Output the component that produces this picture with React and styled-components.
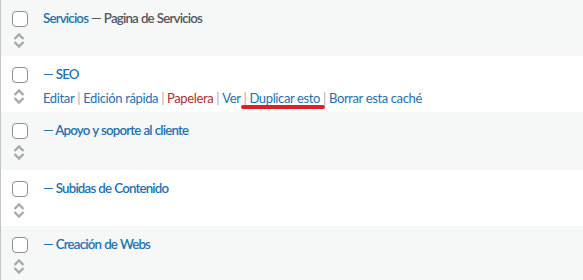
import React from "react";
import styled, { createGlobalStyle } from "styled-components";

const Global = createGlobalStyle`
  body {
    margin: 0;
    background: #fff;
    font-family: Lato, "Open Sans", sans-serif;
  }
`;

const Table = styled.div`
  width: 583px;
  height: 280px;
  overflow: hidden;
  border-left: 1px solid #c3c4c7;
  box-sizing: border-box;
`;

const Row = styled.div`
  display: flex;
  height: ${(p) => p.h}px;
  background: ${(p) => (p.alt ? "#f6f7f7" : "#fff")};
`;

const CheckCol = styled.div`
  width: 42px;
  flex: none;
  display: flex;
  flex-direction: column;
  padding: 11px 0 0 11px;
  box-sizing: border-box;
`;

const Box = styled.span`
  width: 16px;
  height: 16px;
  border: 1px solid #8c8f94;
  border-radius: 4px;
  box-sizing: border-box;
  background: #fff;
`;

const Handle = styled.svg`
  margin: 5px 0 0 1px;
`;

const Content = styled.div`
  padding-top: 8px;
  display: flex;
  flex-direction: column;
  gap: 4px;
`;

const Title = styled.div`
  font-size: 13.3px;
  line-height: 20px;
  font-weight: 600;
  letter-spacing: -0.82px;
  word-spacing: 0.5px;
  color: #2271b1;
  white-space: nowrap;
`;

const State = styled.span`
  color: #50575e;
`;

const Actions = styled.div`
  font-size: 13px;
  line-height: 20px;
  letter-spacing: -0.37px;
  color: #a7aaad;
  white-space: nowrap;
  visibility: ${(p) => (p.show ? "visible" : "hidden")};
`;

const Action = styled.span`
  position: relative;
  color: ${(p) => (p.danger ? "#b32d2e" : "#2271b1")};
`;

const Mark = styled.span`
  position: absolute;
  left: -8px;
  right: -5px;
  bottom: -3px;
  height: 4px;
  border-radius: 2px;
  background: #e41e1e;
`;

const Sep = styled.span`
  margin: 0 3px;
`;

function Arrows() {
  return (
    <Handle width="12" height="17" viewBox="0 0 12 17">
      <path d="M1.5 7 L6 2.5 L10.5 7 M1.5 10 L6 14.5 L10.5 10" fill="none" stroke="#a7aaad" strokeWidth="2.4" />
    </Handle>
  );
}

const actions = [
  { label: "Editar" },
  { label: "Edición rápida" },
  { label: "Papelera", danger: true },
  { label: "Ver" },
  { label: "Duplicar esto", mark: true },
  { label: "Borrar esta caché" },
];

const rows = [
  { link: "Servicios", state: " — Pagina de Servicios", h: 56 },
  { link: "— SEO", show: true, h: 56 },
  { link: "— Apoyo y soporte al cliente", h: 58 },
  { link: "— Subidas de Contenido", h: 56 },
  { link: "— Creación de Webs", h: 56 },
];

export default function App() {
  return (
    <>
      <Global />
      <Table>
        {rows.map((r, i) => (
          <Row key={i} alt={i % 2 === 0} h={r.h}>
            <CheckCol>
              <Box />
              <Arrows />
            </CheckCol>
            <Content>
              <Title>
                {r.link}
                {r.state && <State>{r.state}</State>}
              </Title>
              <Actions show={r.show}>
                {actions.map((a, j) => (
                  <React.Fragment key={a.label}>
                    {j > 0 && <Sep>|</Sep>}
                    <Action danger={a.danger}>
                      {a.label}
                      {a.mark && <Mark />}
                    </Action>
                  </React.Fragment>
                ))}
              </Actions>
            </Content>
          </Row>
        ))}
      </Table>
    </>
  );
}
